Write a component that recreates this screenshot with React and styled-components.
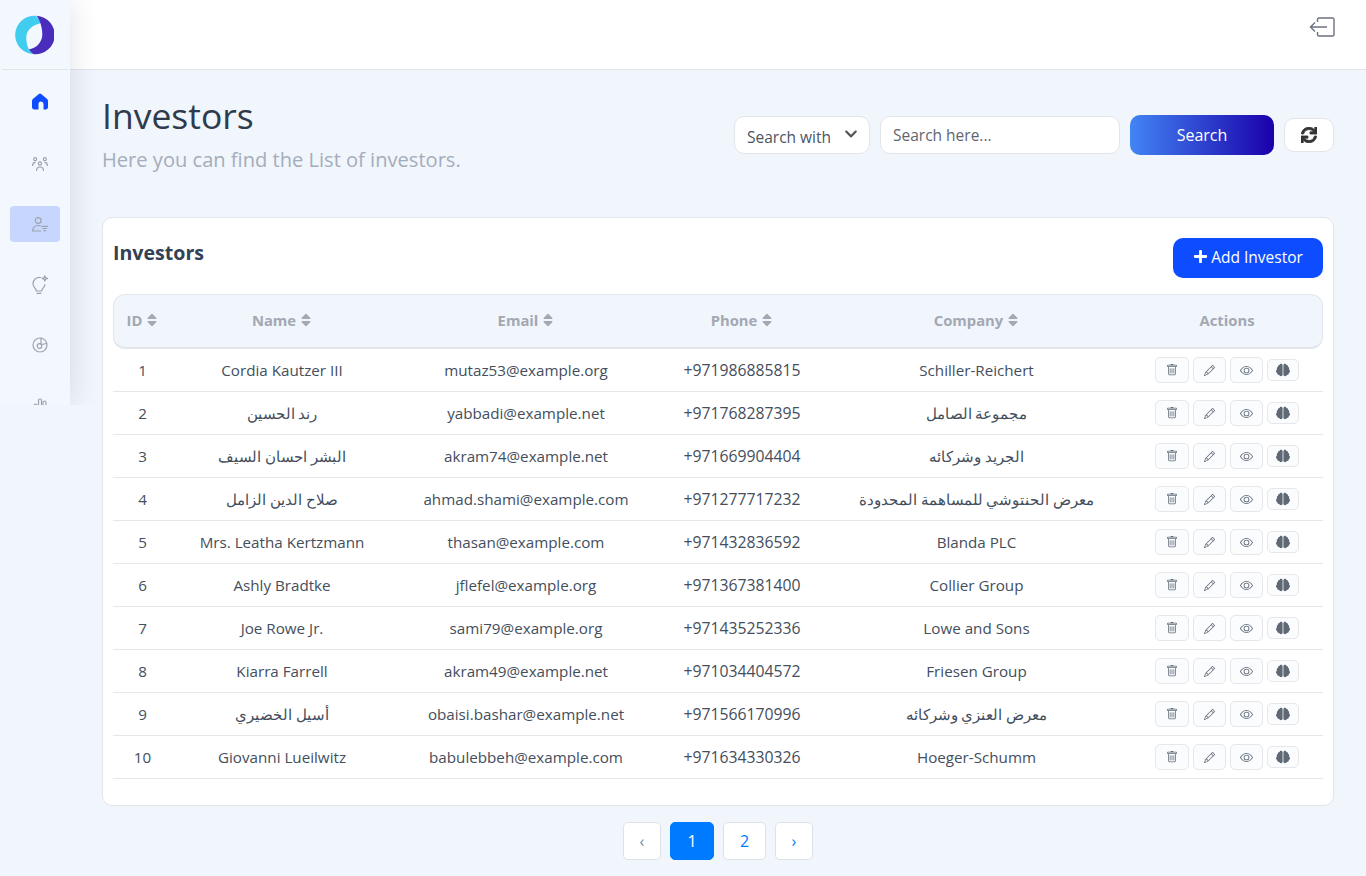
import React from "react";
import styled, { createGlobalStyle } from "styled-components";
import { FaSort, FaSync, FaPlus, FaBrain, FaChevronDown } from "react-icons/fa";
import { BsTrash, BsPencil, BsEye } from "react-icons/bs";

const GlobalStyle = createGlobalStyle`
  * { box-sizing: border-box; }
  html, body { margin: 0; padding: 0; }
  body {
    background: #f1f5fc;
    font-family: "Open Sans", "Noto Sans", "Liberation Sans", sans-serif;
    color: #334155;
  }
`;

const Page = styled.div`
  position: relative;
  min-height: 876px;
`;

const Sidebar = styled.aside`
  position: absolute;
  left: 0;
  top: 0;
  width: 70px;
  height: 405px;
  overflow: hidden;
  background: #f3f7fe;
  box-shadow: 0 0 30px rgba(30, 41, 80, 0.14);
  clip-path: inset(0 -40px 0 0);
  z-index: 2;
`;

const LogoBox = styled.div`
  height: 70px;
  margin: 0 2px;
  padding-right: 2px;
  display: flex;
  align-items: center;
  justify-content: center;
  border-bottom: 1px solid #e2e5ea;
`;

const SideNav = styled.nav`
  display: flex;
  flex-direction: column;
  align-items: center;
  gap: 24.5px;
  padding: 15px 10px 0;
`;

const SideItem = styled.div`
  width: 50px;
  height: 36px;
  flex-shrink: 0;
  padding-left: 10px;
  display: flex;
  align-items: center;
  justify-content: center;
  border-radius: 4px;
  color: ${(p) => (p.$home ? "#0d4dff" : "#9da2ae")};
  background: ${(p) => (p.$active ? "#c7d6fc" : "transparent")};
`;

const TopBar = styled.header`
  height: 70px;
  background: #fff;
  border-bottom: 1px solid #e2e5ea;
  display: flex;
  align-items: center;
  justify-content: flex-end;
  padding: 0 31px 15px 0;
  color: #6b7280;
`;

const Main = styled.main`
  padding: 0 32px 0 102px;
`;

const TitleRow = styled.div`
  display: flex;
  justify-content: space-between;
  padding-top: 22px;
  height: 147px;
`;

const Title = styled.h1`
  margin: 0;
  font-size: 35.5px;
  line-height: 46px;
  font-weight: 400;
  color: #2f3b4c;
`;

const Subtitle = styled.p`
  margin: 8px 0 0;
  font-size: 20.1px;
  line-height: 28px;
  color: #a3adbb;
`;

const SearchBar = styled.div`
  display: flex;
  align-items: center;
  gap: 10px;
  padding-top: 22px;
  height: 64px;
`;

const SelectBox = styled.div`
  width: 136px;
  height: 38px;
  background: #fff;
  border: 1px solid #e2e5ea;
  border-radius: 10px;
  display: flex;
  align-items: center;
  justify-content: space-between;
  padding: 3px 11px 0 12px;
  font-size: 15.5px;
  color: #4b5563;
`;

const SelectArrow = styled(FaChevronDown)`
  margin-top: -6px;
  color: #555;
`;

const SearchInput = styled.input`
  width: 240px;
  height: 38px;
  background: #fff;
  border: 1px solid #e2e5ea;
  border-radius: 10px;
  padding: 0 12px;
  font-family: inherit;
  font-size: 15.5px;
  color: #4b5563;
  &::placeholder { color: #5f6670; opacity: 1; }
`;

const SearchButton = styled.button`
  width: 144px;
  height: 40px;
  border: 0;
  border-radius: 10px;
  background: linear-gradient(90deg, #4285f4, #1a00aa);
  color: #fff;
  font-family: inherit;
  font-size: 16px;
`;

const RefreshButton = styled.button`
  width: 50px;
  height: 34px;
  border: 1px solid #e2e5ea;
  border-radius: 10px;
  background: #fff;
  color: #333;
  display: flex;
  align-items: center;
  justify-content: center;
`;

const RefreshIcon = styled(FaSync)`
  stroke: currentColor;
  stroke-width: 28px;
`;

const Card = styled.section`
  background: #fff;
  border: 1px solid #e2e5ea;
  border-radius: 10px;
  padding: 20px 10px 26px;
  height: 589px;
`;

const CardHead = styled.div`
  display: flex;
  justify-content: space-between;
  align-items: flex-start;
  height: 56px;
`;

const CardTitle = styled.h2`
  margin: 0;
  font-size: 19.6px;
  line-height: 30px;
  font-weight: 700;
  color: #334155;
`;

const AddButton = styled.button`
  width: 150px;
  height: 40px;
  border: 0;
  border-radius: 10px;
  padding: 0 0 3px;
  background: #0d4dff;
  color: #fff;
  font-family: inherit;
  font-size: 15.5px;
  display: flex;
  align-items: center;
  justify-content: center;
  gap: 3px;
`;

const columns = "59px 220px 268px 164px 305px 194px";

const HeadRow = styled.div`
  display: grid;
  grid-template-columns: ${columns};
  height: 55px;
  padding-bottom: 2px;
  align-items: center;
  background: #f1f5fc;
  border: 1px solid #e2e5ea;
  border-bottom-width: 2px;
  border-radius: 12px;
`;

const HeadCell = styled.div`
  display: flex;
  align-items: center;
  justify-content: center;
  gap: 2px;
  font-size: 14.8px;
  font-weight: 700;
  color: #a3a8b3;
`;

const Row = styled.div`
  display: grid;
  grid-template-columns: ${columns};
  height: 43px;
  align-items: center;
  border-bottom: 1px solid #e5e7eb;
`;

const Cell = styled.div`
  text-align: center;
  font-size: ${(p) => (p.$phone ? 15.75 : 15.2)}px;
  color: #444e5c;
  white-space: nowrap;
`;

const Actions = styled.div`
  display: flex;
  align-items: center;
  justify-content: center;
  gap: 4px;
  padding-left: 1px;
`;

const ActionButton = styled.button`
  width: ${(p) => p.$w || 33}px;
  height: ${(p) => p.$h || 26}px;
  padding: 0;
  border: 1px solid #e5e7eb;
  border-radius: 5px;
  background: #fbfcfe;
  color: #5f6875;
  display: flex;
  align-items: center;
  justify-content: center;
`;

const Pager = styled.div`
  display: flex;
  justify-content: center;
  gap: 9px;
  padding-top: 16px;
`;

const PageButton = styled.button`
  width: ${(p) => p.$w || 38}px;
  height: 38px;
  border: 1px solid ${(p) => (p.$active ? "#007bff" : "#dee2e6")};
  border-radius: 5px;
  background: ${(p) => (p.$active ? "#007bff" : "#fff")};
  color: ${(p) => (p.$active ? "#fff" : p.$muted ? "#6c8cb0" : "#007bff")};
  font-family: inherit;
  font-size: 16px;
`;

const investors = [
  [1, "Cordia Kautzer III", "mutaz53@example.org", "+971986885815", "Schiller-Reichert"],
  [2, "رند الحسين", "yabbadi@example.net", "+971768287395", "مجموعة الصامل"],
  [3, "البشر احسان السيف", "akram74@example.net", "+971669904404", "الجريد وشركائه"],
  [4, "صلاح الدين الزامل", "ahmad.shami@example.com", "+971277717232", "معرض الحنتوشي للمساهمة المحدودة"],
  [5, "Mrs. Leatha Kertzmann", "thasan@example.com", "+971432836592", "Blanda PLC"],
  [6, "Ashly Bradtke", "jflefel@example.org", "+971367381400", "Collier Group"],
  [7, "Joe Rowe Jr.", "sami79@example.org", "+971435252336", "Lowe and Sons"],
  [8, "Kiarra Farrell", "akram49@example.net", "+971034404572", "Friesen Group"],
  [9, "أسيل الخضيري", "obaisi.bashar@example.net", "+971566170996", "معرض العنزي وشركائه"],
  [10, "Giovanni Lueilwitz", "babulebbeh@example.com", "+971634330326", "Hoeger-Schumm"],
];

const Logo = () => (
  <svg width="40" height="40" viewBox="0 0 40 40">
    <path d="M21.700 .7A19.300 19.300 0 0 0 19.300 39.300C15 36.500 12 30 12.300 22 12.600 15 19 9.500 26.700 8.300 26 5.500 24 2.500 21.700 .7Z" fill="#40cdef" />
    <path d="M22.700 .7A19.300 19.300 0 0 1 20 39.300C18 38.500 16 36.500 15 34.300 22 33.500 28 27.500 28.300 20 28.500 13 26 5 22.700 .7Z" fill="#4a2dbd" />
  </svg>
);

const HomeIcon = () => (
  <svg width="16" height="17" viewBox="0 0 16 17" fill="currentColor" style={{ marginBottom: 4 }}>
    <path d="M6.900 .9a1.700 1.700 0 0 1 2.200 0l5.800 4.900c.7.600 1.100 1.400 1.100 2.300v6.200c0 1.200-1 2.200-2.200 2.200h-2.300V11a2.500 2.500 0 0 0-5 0v5.500H2.200C1 16.500 0 15.500 0 14.300V8.100c0-.9.400-1.700 1.100-2.300Z" />
  </svg>
);

const strokeIcon = { fill: "none", stroke: "currentColor", strokeWidth: 1.2, strokeLinecap: "round", strokeLinejoin: "round" };

const PeopleIcon = () => (
  <svg width="16" height="14" viewBox="0 0 16 14" {...strokeIcon}>
    <circle cx="8" cy="6.500" r="1.600" />
    <path d="M4.600 13.500c0-2.400 1.400-3.500 3.400-3.500s3.400 1.100 3.400 3.500" />
    <circle cx="3.200" cy="2.200" r="1.500" />
    <circle cx="12.800" cy="2.200" r="1.500" />
    <path d="M.6 8.500c0-1.900 1.100-3.200 2.600-3.200M15.400 8.500c0-1.900-1.100-3.200-2.600-3.200" />
  </svg>
);

const InvestorIcon = () => (
  <svg width="16" height="15" viewBox="0 0 16 15" {...strokeIcon}>
    <circle cx="6.200" cy="3.500" r="2.900" />
    <path d="M.7 13.800c0-3.200 2.300-5.300 5.500-5.300 .7 0 1.400 .1 2 .3M.7 14h8" />
    <path d="M10 9.300h5.500M11 11.500h3.500M12 13.700h1.500" />
  </svg>
);

const BulbIcon = () => (
  <svg width="16" height="19" viewBox="0 0 16 19" {...strokeIcon}>
    <path d="M8.500 2.500C4.200 2 1 5 1 8.700c0 2.300 1.200 3.700 2.300 4.900.6.700.9 1.300.9 2.400h5.600c0-1.100.3-1.700.9-2.400 1-1.100 2-2.300 2.200-4" />
    <path d="M5 18.300h4" />
    <path d="M12.800 .7l.7 2 2 .7-2 .7-.7 2-.7-2-2-.7 2-.7Z" />
  </svg>
);

const DialIcon = () => (
  <svg width="16" height="16" viewBox="0 0 16 16" {...strokeIcon}>
    <circle cx="8" cy="8" r="7" />
    <circle cx="7.500" cy="9" r="2.300" />
    <path d="M9 1.200V7M9.500 7.500L14.800 6.500" />
  </svg>
);

const ChartIcon = () => (
  <svg width="18" height="18" viewBox="0 0 18 18" {...strokeIcon}>
    <rect x="7.500" y="2" width="3" height="13" rx="1.500" />
    <rect x="12" y="4" width="3" height="11" rx="1.500" />
    <rect x="3" y="7" width="3" height="8" rx="1.500" />
  </svg>
);

const LogoutIcon = () => (
  <svg width="26" height="20" viewBox="0 0 26 20" fill="none" stroke="currentColor" strokeWidth="1.400">
    <path d="M8.500 5V2.500Q8.500 1 10 1H23.500Q25 1 25 2.500V17.500Q25 19 23.500 19H10Q8.500 19 8.500 17.500V15" />
    <path d="M18 10H1.500M6 5.500L1.500 10L6 14.500" />
  </svg>
);

export default function App() {
  return (
    <Page>
      <GlobalStyle />
      <Sidebar>
        <LogoBox><Logo /></LogoBox>
        <SideNav>
          <SideItem $home><HomeIcon /></SideItem>
          <SideItem><PeopleIcon /></SideItem>
          <SideItem $active><InvestorIcon /></SideItem>
          <SideItem><BulbIcon /></SideItem>
          <SideItem><DialIcon /></SideItem>
          <SideItem><ChartIcon /></SideItem>
        </SideNav>
      </Sidebar>
      <TopBar><LogoutIcon /></TopBar>
      <Main>
        <TitleRow>
          <div>
            <Title>Investors</Title>
            <Subtitle>Here you can find the List of investors.</Subtitle>
          </div>
          <SearchBar>
            <SelectBox>Search with <SelectArrow size={14} /></SelectBox>
            <SearchInput placeholder="Search here..." />
            <SearchButton>Search</SearchButton>
            <RefreshButton><RefreshIcon size={16} /></RefreshButton>
          </SearchBar>
        </TitleRow>
        <Card>
          <CardHead>
            <CardTitle>Investors</CardTitle>
            <AddButton><FaPlus size={15} /> Add Investor</AddButton>
          </CardHead>
          <HeadRow>
            <HeadCell>ID <FaSort size={16} /></HeadCell>
            <HeadCell>Name <FaSort size={16} /></HeadCell>
            <HeadCell>Email <FaSort size={16} /></HeadCell>
            <HeadCell>Phone <FaSort size={16} /></HeadCell>
            <HeadCell>Company <FaSort size={16} /></HeadCell>
            <HeadCell>Actions</HeadCell>
          </HeadRow>
          {investors.map((r) => (
            <Row key={r[0]}>
              {r.map((v, i) => <Cell key={i} $phone={i === 3}>{v}</Cell>)}
              <Actions>
                <ActionButton $w={34}><BsTrash size={12} /></ActionButton>
                <ActionButton><BsPencil size={11} /></ActionButton>
                <ActionButton><BsEye size={13} /></ActionButton>
                <ActionButton $w={32} $h={22}><FaBrain size={14} /></ActionButton>
              </Actions>
            </Row>
          ))}
        </Card>
        <Pager>
          <PageButton $muted>‹</PageButton>
          <PageButton $active $w={44}>1</PageButton>
          <PageButton $w={43}>2</PageButton>
          <PageButton>›</PageButton>
        </Pager>
      </Main>
    </Page>
  );
}
